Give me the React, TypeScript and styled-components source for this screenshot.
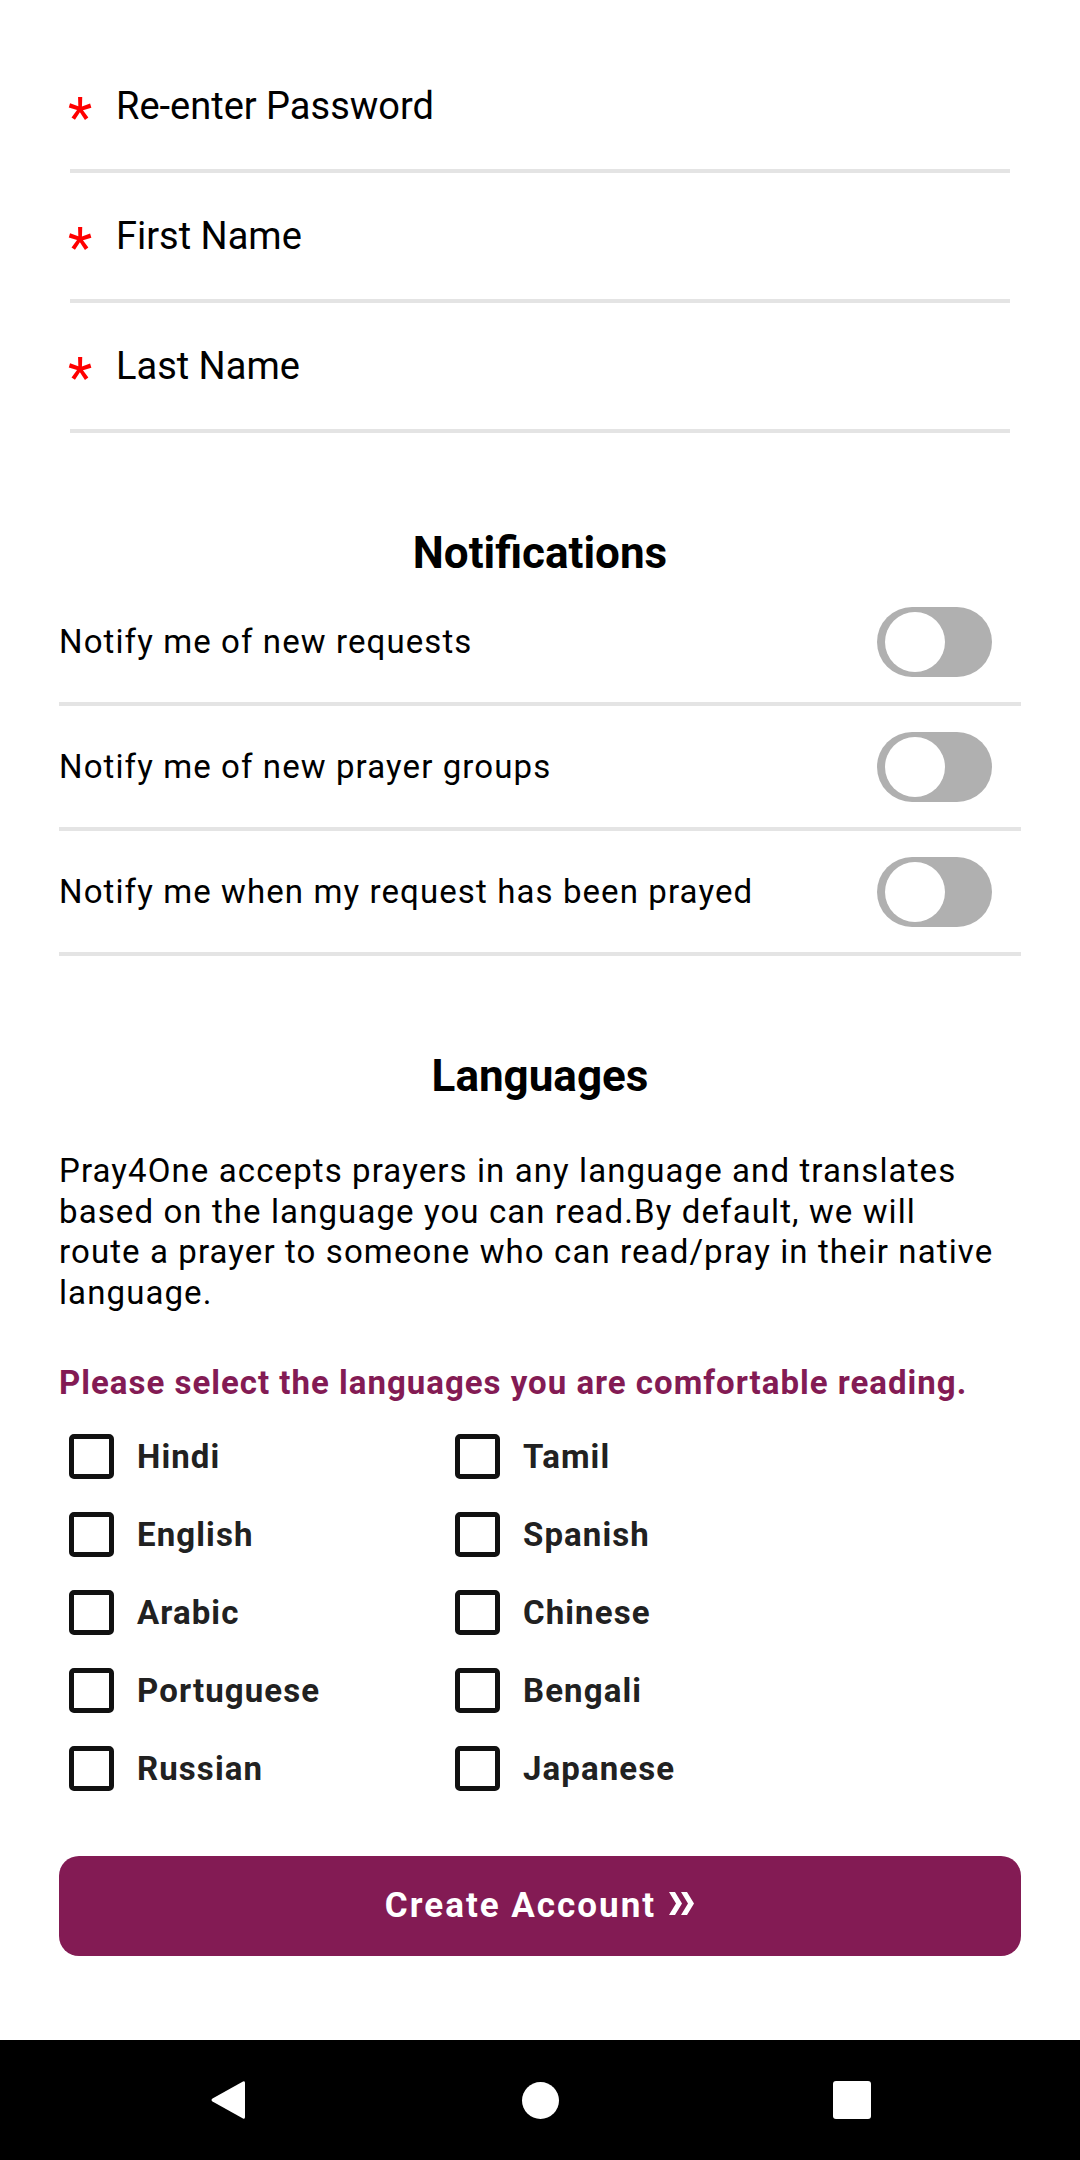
import React from "react";
import styled, { createGlobalStyle } from "styled-components";

const GlobalStyle = createGlobalStyle`
  html, body {
    margin: 0;
    padding: 0;
    background: #fff;
  }
  body {
    font-family: Roboto, "Liberation Sans", sans-serif;
    color: #000;
  }
  * {
    box-sizing: border-box;
  }
`;

const colors = {
  purple: "#831b54",
  divider: "#e4e4e4",
  toggle: "#b0b0b0",
  text: "#000",
  label: "#212121",
};

const Screen = styled.div`
  width: 1080px;
  height: 2160px;
  display: flex;
  flex-direction: column;
  overflow: hidden;
`;

const Content = styled.div`
  flex: 1;
  padding: 43px 59px 0;
  display: flex;
  flex-direction: column;
`;

const Field = styled.div`
  height: 130px;
  margin: 0 11px;
  display: flex;
  align-items: center;
  border-bottom: 4px solid ${colors.divider};
`;

const Required = styled.span`
  width: 46px;
  font-size: 56px;
  line-height: 1;
  color: #ff0000;
  transform: translate(-2px, 12px);
`;

const FieldLabel = styled.span`
  font-size: 38px;
  color: ${colors.text};
`;

const SectionTitle = styled.h2`
  margin: 94px 0 2px;
  font-size: 44px;
  line-height: 52px;
  font-weight: 700;
  text-align: center;
`;

const ToggleRow = styled.div`
  height: 125px;
  display: flex;
  align-items: center;
  justify-content: space-between;
  padding-right: 29px;
  border-bottom: 4px solid ${colors.divider};
`;

const RowText = styled.span`
  font-size: 33px;
  letter-spacing: 1.1px;
`;

const Track = styled.div`
  width: 115px;
  height: 70px;
  border-radius: 35px;
  background: ${colors.toggle};
  padding: 5px 8px;
  display: flex;
  align-items: center;
`;

const Thumb = styled.div`
  width: 60px;
  height: 60px;
  border-radius: 50%;
  background: #fff;
`;

const Paragraph = styled.p`
  margin: 47px 0 0;
  padding-right: 21px;
  font-size: 33px;
  line-height: 40.7px;
  letter-spacing: 1.1px;
`;

const Prompt = styled.p`
  margin: 49px 0 0;
  font-size: 33px;
  font-weight: 700;
  letter-spacing: 1px;
  color: ${colors.purple};
`;

const LangGrid = styled.div`
  margin-top: 16px;
  padding-left: 10px;
  display: grid;
  grid-template-columns: 386px 386px;
  grid-auto-rows: 78px;
`;

const LangOption = styled.label`
  display: flex;
  align-items: center;
  gap: 23px;
`;

const Box = styled.span`
  width: 45px;
  height: 45px;
  border: 5px solid #111;
  border-radius: 5px;
`;

const LangName = styled.span`
  font-size: 33px;
  font-weight: 700;
  letter-spacing: 1.1px;
  color: ${colors.label};
`;

const SubmitButton = styled.button`
  margin-top: 48px;
  height: 100px;
  border: none;
  border-radius: 20px;
  background: ${colors.purple};
  color: #fff;
  font-family: Roboto, "Liberation Sans", sans-serif;
  font-size: 35px;
  font-weight: 700;
  letter-spacing: 2px;
  display: flex;
  align-items: center;
  justify-content: center;
  gap: 13px;
`;

const NavBar = styled.div`
  height: 120px;
  background: #000;
  display: flex;
  justify-content: center;
  align-items: center;
`;

const NavButton = styled.div`
  width: 312px;
  display: flex;
  justify-content: center;
  align-items: center;
`;

const HomeDot = styled.div`
  width: 37px;
  height: 37px;
  border-radius: 50%;
  background: #fff;
`;

const RecentsSquare = styled.div`
  width: 38px;
  height: 38px;
  border-radius: 3px;
  background: #fff;
`;

const fields = ["Re-enter Password", "First Name", "Last Name"];

const notifications = [
  "Notify me of new requests",
  "Notify me of new prayer groups",
  "Notify me when my request has been prayed",
];

const languages = [
  "Hindi",
  "Tamil",
  "English",
  "Spanish",
  "Arabic",
  "Chinese",
  "Portuguese",
  "Bengali",
  "Russian",
  "Japanese",
];

export default function App() {
  return (
    <>
      <GlobalStyle />
      <Screen>
        <Content>
          {fields.map((f) => (
            <Field key={f}>
              <Required>*</Required>
              <FieldLabel>{f}</FieldLabel>
            </Field>
          ))}

          <SectionTitle>Notifications</SectionTitle>
          {notifications.map((n) => (
            <ToggleRow key={n}>
              <RowText>{n}</RowText>
              <Track>
                <Thumb />
              </Track>
            </ToggleRow>
          ))}

          <SectionTitle>Languages</SectionTitle>
          <Paragraph>
            Pray4One accepts prayers in any language and translates based on
            the language you can read.By default, we will route a prayer to
            someone who can read/pray in their native language.
          </Paragraph>
          <Prompt>Please select the languages you are comfortable reading.</Prompt>
          <LangGrid>
            {languages.map((l) => (
              <LangOption key={l}>
                <Box />
                <LangName>{l}</LangName>
              </LangOption>
            ))}
          </LangGrid>

          <SubmitButton>
            <span>Create Account</span>
            <svg width="26" height="23" viewBox="0 0 26 23" style={{ marginTop: -4 }}>
              <path d="M0 0 H6 L13 11.5 L6 23 H0 L7 11.5 Z" fill="#fff" />
              <path d="M12 0 H18 L25 11.5 L18 23 H12 L19 11.5 Z" fill="#fff" />
            </svg>
          </SubmitButton>
        </Content>

        <NavBar>
          <NavButton>
            <svg width="36" height="42" viewBox="0 0 36 42">
              <path
                d="M33 2.5 Q35 1.5 35 4 L35 38 Q35 40.5 33 39.5 L2.5 22.5 Q0.5 21 2.5 19.5 Z"
                fill="#fff"
              />
            </svg>
          </NavButton>
          <NavButton>
            <HomeDot />
          </NavButton>
          <NavButton>
            <RecentsSquare />
          </NavButton>
        </NavBar>
      </Screen>
    </>
  );
}
